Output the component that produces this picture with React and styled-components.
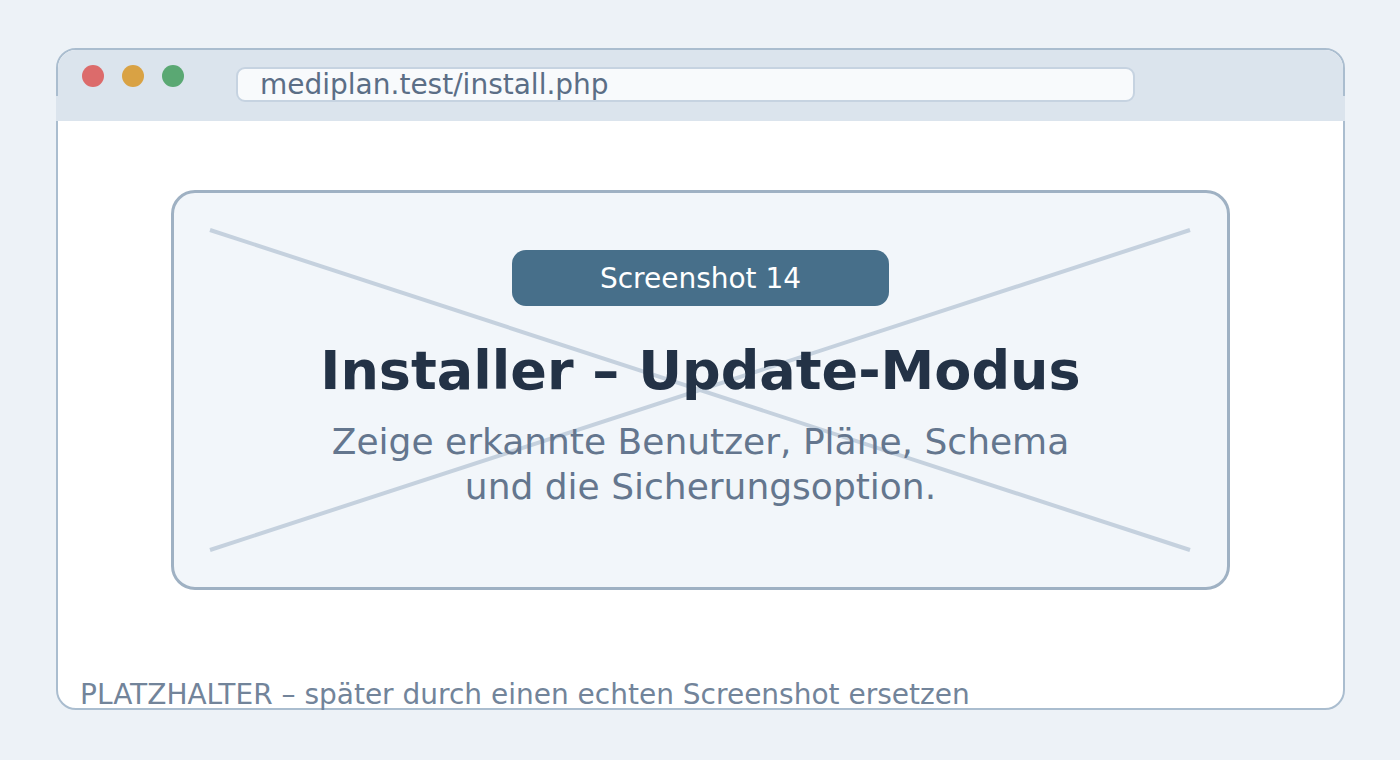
import React from "react";
import styled, { createGlobalStyle } from "styled-components";

const GlobalStyle = createGlobalStyle`
  html, body {
    margin: 0;
    padding: 0;
    background: #edf2f7;
  }
  body {
    font-family: "DejaVu Sans", "Liberation Sans", sans-serif;
  }
`;

const lights = ["#dc6b6b", "#d9a244", "#5aa873"];

const App = () => {
  return (
    <>
      <GlobalStyle />
      <Page>
        <Window>
          <TitleBar>
            <Lights>
              {lights.map((c) => (
                <Light key={c} color={c} />
              ))}
            </Lights>
            <UrlBar>mediplan.test/install.php</UrlBar>
          </TitleBar>
          <Content>
            <Card>
              <Cross viewBox="0 0 1053 394" preserveAspectRatio="none">
                <line x1="36" y1="37" x2="1016" y2="357" />
                <line x1="36" y1="357" x2="1016" y2="37" />
              </Cross>
              <Badge>Screenshot 14</Badge>
              <Title>Installer – Update-Modus</Title>
              <Subtitle>
                Zeige erkannte Benutzer, Pläne, Schema
                <br />
                und die Sicherungsoption.
              </Subtitle>
            </Card>
            <Footer>PLATZHALTER – später durch einen echten Screenshot ersetzen</Footer>
          </Content>
        </Window>
      </Page>
    </>
  );
};

export default App;

const Page = styled.div`
  width: 1400px;
  height: 760px;
  box-sizing: border-box;
  padding: 48px 55px 50px 56px;
`;

const Window = styled.div`
  height: 100%;
  box-sizing: border-box;
  border: 2px solid #aabdcf;
  border-radius: 20px;
  background: #ffffff;
  display: flex;
  flex-direction: column;
`;

const TitleBar = styled.div`
  position: relative;
  height: 71px;
  flex-shrink: 0;
  background: #dbe4ed;
  border-radius: 18px 18px 0 0;
  display: flex;
  align-items: flex-start;
  padding-left: 24px;

  /* header fill runs over the side borders in its lower part */
  &::after {
    content: "";
    position: absolute;
    left: -2px;
    right: -2px;
    bottom: 0;
    height: 25px;
    background: #dbe4ed;
  }
`;

const Lights = styled.div`
  display: flex;
  gap: 18px;
  margin-top: 15px;
`;

const Light = styled.span`
  width: 22px;
  height: 22px;
  border-radius: 50%;
  background: ${(p) => p.color};
`;

const UrlBar = styled.div`
  position: relative;
  z-index: 1;
  margin-top: 17px;
  margin-left: 52px;
  width: 899px;
  height: 35px;
  box-sizing: border-box;
  border: 2px solid #c6d3e1;
  border-radius: 9px;
  background: #f8fafc;
  padding-left: 22px;
  display: flex;
  align-items: center;
  font-size: 28px;
  line-height: 30px;
  color: #5b6e86;
`;

const Content = styled.div`
  flex: 1;
  display: flex;
  flex-direction: column;
  align-items: center;
  padding-top: 69px;
`;

const Card = styled.div`
  position: relative;
  width: 1059px;
  height: 400px;
  box-sizing: border-box;
  border: 3px solid #9fb1c3;
  border-radius: 24px;
  background: #f2f6fa;
  display: flex;
  flex-direction: column;
  align-items: center;
  padding-top: 57px;
`;

const Cross = styled.svg`
  position: absolute;
  inset: 0;
  width: 100%;
  height: 100%;

  line {
    stroke: #c5d1de;
    stroke-width: 4;
  }
`;

const Badge = styled.div`
  position: relative;
  width: 377px;
  height: 56px;
  border-radius: 14px;
  background: #476f8a;
  color: #ffffff;
  font-size: 28px;
  display: flex;
  align-items: center;
  justify-content: center;
`;

const Title = styled.h1`
  position: relative;
  margin: 33px 0 0;
  font-size: 54px;
  line-height: 64px;
  font-weight: 700;
  color: #233246;
`;

const Subtitle = styled.p`
  position: relative;
  margin: 16px 0 0;
  font-size: 36px;
  line-height: 45px;
  text-align: center;
  color: #64768e;
`;

const Footer = styled.div`
  align-self: stretch;
  margin-top: auto;
  margin-bottom: -2px;
  padding-left: 22px;
  font-size: 28px;
  line-height: 30px;
  color: #72849a;
`;
